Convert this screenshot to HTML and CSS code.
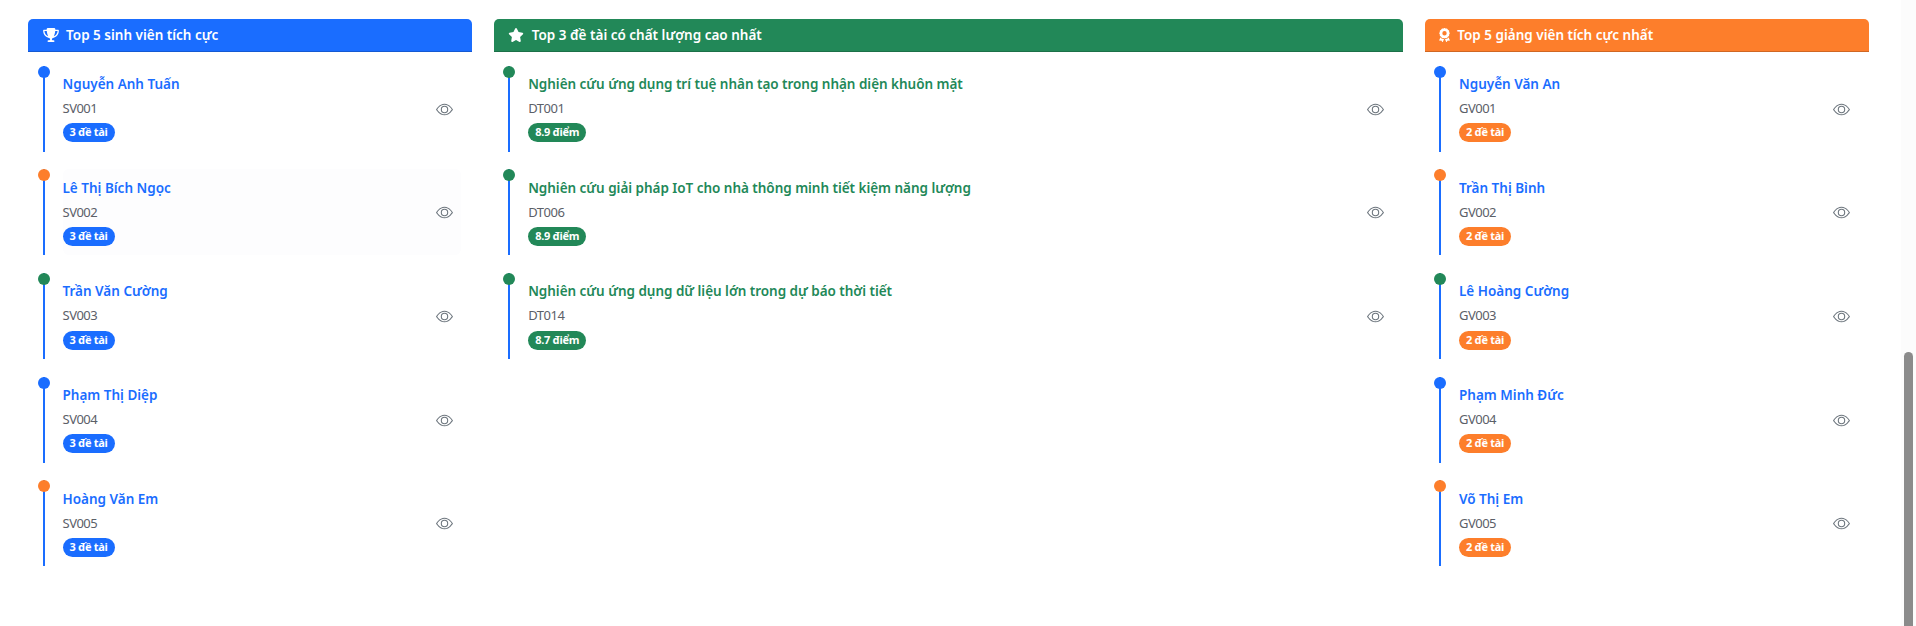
FILE: index.html
```html
<!DOCTYPE html>
<html lang="vi">
<head>
<meta charset="utf-8">
<title>Top</title>
<link rel="stylesheet" href="styles.css">
</head>
<body>
<svg class="sprite" aria-hidden="true">
  <symbol id="eye" viewBox="0 0 16 16"><path d="M16 8s-3-5.500-8-5.500S0 8 0 8s3 5.500 8 5.500S16 8 16 8M1.173 8a13 13 0 0 1 1.660-2.043C4.120 4.668 5.880 3.500 8 3.500s3.879 1.168 5.168 2.457A13 13 0 0 1 14.828 8q-.086.130-.195.288c-.335.480-.830 1.120-1.465 1.755C11.879 11.332 10.119 12.500 8 12.500s-3.879-1.168-5.168-2.457A13 13 0 0 1 1.172 8z"/><path d="M8 5.500a2.500 2.500 0 1 0 0 5 2.500 2.500 0 0 0 0-5M4.500 8a3.500 3.500 0 1 1 7 0 3.500 3.500 0 0 1-7 0"/></symbol>
</svg>
<main class="page">
  <div class="board">
    <section class="card">
      <h6 class="head blue">
        <svg class="head-icon" viewBox="0 0 576 512"><path d="M400 0H176c-26.500 0-48.100 21.800-47.100 48.200.2 5.300.4 10.600.7 15.800H24C10.700 64 0 74.700 0 88c0 92.600 33.500 157 78.500 200.700 44.300 43.100 98.300 64.800 138.100 75.800 23.400 6.500 39.400 26 39.400 45.600 0 20.900-17 37.900-37.900 37.900H192c-17.700 0-32 14.300-32 32s14.300 32 32 32h192c17.700 0 32-14.300 32-32s-14.300-32-32-32h-26.100c-20.900 0-37.900-17-37.900-37.900 0-19.600 15.900-39.200 39.400-45.600 39.900-11 93.900-32.700 138.200-75.800C542.500 245 576 180.600 576 88c0-13.300-10.700-24-24-24H446.400c.3-5.200.5-10.400.7-15.800C448.100 21.800 426.500 0 400 0zM48.900 112h84.400c9.100 90.100 29.200 150.300 51.900 190.600-24.900-11-50.800-26.500-73.200-48.300-32-31.100-58-76-63.100-142.300zm415.300 142.300c-22.400 21.800-48.300 37.300-73.200 48.300 22.700-40.300 42.800-100.500 51.900-190.600h84.400c-5.100 66.300-31.100 111.200-63.100 142.300z"/></svg>
        <span>Top 5 sinh viên tích cực</span>
      </h6>
      <ul class="list">
        <li class="item"><i class="dot blue"></i><div class="body"><div><a class="name">Nguyễn Anh Tuấn</a><p class="code">SV001</p><span class="badge blue">3 đề tài</span></div><svg class="eye"><use href="#eye"/></svg></div></li>
        <li class="item"><i class="dot orange"></i><div class="body hover"><div><a class="name">Lê Thị Bích Ngọc</a><p class="code">SV002</p><span class="badge blue">3 đề tài</span></div><svg class="eye"><use href="#eye"/></svg></div></li>
        <li class="item"><i class="dot green"></i><div class="body"><div><a class="name">Trần Văn Cường</a><p class="code">SV003</p><span class="badge blue">3 đề tài</span></div><svg class="eye"><use href="#eye"/></svg></div></li>
        <li class="item"><i class="dot blue"></i><div class="body"><div><a class="name">Phạm Thị Diệp</a><p class="code">SV004</p><span class="badge blue">3 đề tài</span></div><svg class="eye"><use href="#eye"/></svg></div></li>
        <li class="item"><i class="dot orange"></i><div class="body"><div><a class="name">Hoàng Văn Em</a><p class="code">SV005</p><span class="badge blue">3 đề tài</span></div><svg class="eye"><use href="#eye"/></svg></div></li>
      </ul>
    </section>
    <section class="card wide">
      <h6 class="head green">
        <svg class="head-icon" viewBox="0 0 576 512"><path d="M316.900 18C311.600 7 300.400 0 288.100 0s-23.400 7-28.800 18L195 150.300 51.400 171.500c-12 1.800-22 10.200-25.700 21.700s-.7 24.200 7.900 32.700L137.800 329l-24.600 145.700c-2 12 3 24.200 12.900 31.300s23 8 33.800 2.300l128.300-68.500 128.300 68.500c10.800 5.700 23.900 4.900 33.800-2.300s14.900-19.300 12.900-31.300L438.500 329l104.200-103.100c8.600-8.500 11.700-21.200 7.900-32.700s-13.700-19.900-25.700-21.700l-143.700-21.200L316.900 18z"/></svg>
        <span>Top 3 đề tài có chất lượng cao nhất</span>
      </h6>
      <ul class="list">
        <li class="item"><i class="dot green"></i><div class="body"><div><a class="name topic">Nghiên cứu ứng dụng trí tuệ nhân tạo trong nhận diện khuôn mặt</a><p class="code">DT001</p><span class="badge green">8.9 điểm</span></div><svg class="eye"><use href="#eye"/></svg></div></li>
        <li class="item"><i class="dot green"></i><div class="body"><div><a class="name topic">Nghiên cứu giải pháp IoT cho nhà thông minh tiết kiệm năng lượng</a><p class="code">DT006</p><span class="badge green">8.9 điểm</span></div><svg class="eye"><use href="#eye"/></svg></div></li>
        <li class="item"><i class="dot green"></i><div class="body"><div><a class="name topic">Nghiên cứu ứng dụng dữ liệu lớn trong dự báo thời tiết</a><p class="code">DT014</p><span class="badge green">8.7 điểm</span></div><svg class="eye"><use href="#eye"/></svg></div></li>
      </ul>
    </section>
    <section class="card side">
      <h6 class="head orange">
        <svg class="head-icon narrow" viewBox="0 0 384 512"><path fill-rule="evenodd" d="M173.800 5.500c11-7.300 25.400-7.300 36.400 0L228 17.200c6 3.900 13 5.800 20.100 5.400l21.300-1.300c13.200-.8 25.600 6.400 31.500 18.200l9.600 19.100c3.200 6.400 8.400 11.500 14.700 14.700l19.300 9.700c11.800 5.900 19 18.300 18.200 31.500l-1.300 21.300c-.4 7.100 1.500 14.200 5.400 20.100l11.800 17.800c7.300 11 7.300 25.400 0 36.400L366.800 228c-3.900 6-5.800 13-5.400 20.100l1.300 21.300c.8 13.200-6.400 25.600-18.200 31.500l-19.100 9.600c-6.400 3.200-11.500 8.400-14.700 14.700l-9.700 19.300c-5.900 11.800-18.300 19-31.500 18.200l-21.300-1.300c-7.100-.4-14.200 1.500-20.100 5.400l-17.800 11.800c-11 7.300-25.400 7.300-36.400 0L156 366.800c-6-3.900-13-5.800-20.100-5.400l-21.300 1.300c-13.200.8-25.600-6.400-31.500-18.200l-9.600-19.100c-3.200-6.400-8.400-11.500-14.700-14.700l-19.300-9.700c-11.800-5.900-19-18.300-18.200-31.500l1.300-21.300c.4-7.100-1.500-14.200-5.400-20.100L5.500 210.200c-7.300-11-7.300-25.400 0-36.400L17.200 156c3.900-6 5.800-13 5.400-20.100l-1.300-21.300c-.8-13.200 6.400-25.600 18.200-31.500l19.100-9.600C65 70.200 70.200 65 73.400 58.600L83.100 39.300c5.900-11.800 18.300-19 31.500-18.200l21.300 1.300c7.100.4 14.200-1.500 20.100-5.400L173.800 5.500zM272 192a80 80 0 1 0-160 0 80 80 0 1 0 160 0zM1.300 441.800 44.400 339.300c.2.1.3.2.4.4l9.600 19.100c11.700 23.200 36 37.300 62 35.800l21.300-1.300c.2 0 .5 0 .7.200l17.800 11.800c5.100 3.300 10.500 5.900 16.100 7.700l-37.600 89.300c-2.300 5.500-7.400 9.200-13.300 9.700s-11.600-2.200-14.800-7.200L74.400 455.500l-56.100 8.300c-5.700.8-11.400-1.500-15-6s-4.300-10.700-2.100-16zm248 60.400L211.700 413c5.600-1.800 11-4.300 16.100-7.700l17.800-11.800c.2-.1.4-.2.7-.2l21.300 1.300c26 1.500 50.300-12.600 62-35.800l9.600-19.100c.1-.2.2-.3.4-.4l43.200 102.500c2.200 5.300 1.400 11.400-2.100 16s-9.300 6.900-15 6l-56.100-8.300-32.200 49.200c-3.200 5-8.900 7.700-14.800 7.200s-11-4.300-13.300-9.700z"/></svg>
        <span>Top 5 giảng viên tích cực nhất</span>
      </h6>
      <ul class="list">
        <li class="item"><i class="dot blue"></i><div class="body"><div><a class="name">Nguyễn Văn An</a><p class="code">GV001</p><span class="badge orange">2 đề tài</span></div><svg class="eye"><use href="#eye"/></svg></div></li>
        <li class="item"><i class="dot orange"></i><div class="body"><div><a class="name">Trần Thị Bình</a><p class="code">GV002</p><span class="badge orange">2 đề tài</span></div><svg class="eye"><use href="#eye"/></svg></div></li>
        <li class="item"><i class="dot green"></i><div class="body"><div><a class="name">Lê Hoàng Cường</a><p class="code">GV003</p><span class="badge orange">2 đề tài</span></div><svg class="eye"><use href="#eye"/></svg></div></li>
        <li class="item"><i class="dot blue"></i><div class="body"><div><a class="name">Phạm Minh Đức</a><p class="code">GV004</p><span class="badge orange">2 đề tài</span></div><svg class="eye"><use href="#eye"/></svg></div></li>
        <li class="item"><i class="dot orange"></i><div class="body"><div><a class="name">Võ Thị Em</a><p class="code">GV005</p><span class="badge orange">2 đề tài</span></div><svg class="eye"><use href="#eye"/></svg></div></li>
      </ul>
    </section>
  </div>
  <div class="scrollbar"><div class="thumb"></div></div>
</main>
</body>
</html>
```

FILE: styles.css
```css
* { box-sizing: border-box; }
body { margin: 0; background: #fff; font-family: "Noto Sans", "Open Sans", sans-serif; overflow: hidden; }
.sprite { display: none; }
.page { display: flex; height: 626px; }
.board { display: grid; grid-template-columns: 443.7px 909.5px 443.7px; column-gap: 22px; align-content: start; flex: 1; padding: 19px 0 0 28px; }
.blue { background: #1a6dff; }
.green { background: #228858; }
.orange { background: #fd7e2b; }
.head { display: flex; align-items: center; gap: 7.6px; height: 33px; margin: 0; padding: 0 14.5px; border-bottom: 1px solid rgba(0, 0, 0, .175); border-radius: 5px 5px 0 0; color: #fff; font-size: 13.5px; font-weight: 600; line-height: 20px; white-space: nowrap; }
.head-icon { width: 16px; height: 14px; fill: #fff; flex: none; }
.head-icon.narrow { width: 11px; }
.side .head { padding-left: 13.5px; }
.list { list-style: none; margin: 0; padding: 13.700px 11px 0 14.500px; display: flex; flex-direction: column; gap: 17.650px; }
.side .list { padding-left: 13.8px; }
.item { position: relative; height: 86px; padding-left: 18px; border-left: 2px solid #1a6dff; }
.dot { position: absolute; left: -7px; top: 0; width: 12px; height: 12px; border-radius: 50%; }
.body { display: flex; justify-content: space-between; align-items: center; height: 86px; padding-right: 8px; border-radius: 6px; }
.body.hover { background: #fdfdfe; }
.name { display: block; margin-top: -1px; color: #1a6dff; font-size: 13.5px; font-weight: 600; line-height: 20px; white-space: nowrap; }
.name.topic { color: #228858; letter-spacing: -.03px; }
.code { margin: 5px 0 6.5px; color: #5b6068; font-size: 13px; letter-spacing: -.5px; line-height: 18px; }
.badge { display: block; width: max-content; height: 19px; padding: 0 7px; border-radius: 10px; color: #fff; font-size: 11px; font-weight: 700; letter-spacing: -.28px; line-height: 18px; }
.eye { width: 17px; height: 17px; margin-top: 1px; fill: #6c757d; flex: none; }
.scrollbar { width: 15px; padding: 352px 3px 0; background: #fcfcfc; }
.thumb { height: 274px; background: #8b8b8b; border-radius: 4.500px 4.500px 0 0; }
```
